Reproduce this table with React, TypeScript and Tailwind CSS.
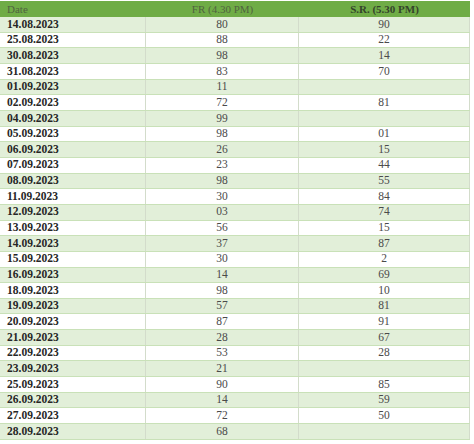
import React from "react";

const rows: [string, string, string][] = [
  ["14.08.2023", "80", "90"],
  ["25.08.2023", "88", "22"],
  ["30.08.2023", "98", "14"],
  ["31.08.2023", "83", "70"],
  ["01.09.2023", "11", ""],
  ["02.09.2023", "72", "81"],
  ["04.09.2023", "99", ""],
  ["05.09.2023", "98", "01"],
  ["06.09.2023", "26", "15"],
  ["07.09.2023", "23", "44"],
  ["08.09.2023", "98", "55"],
  ["11.09.2023", "30", "84"],
  ["12.09.2023", "03", "74"],
  ["13.09.2023", "56", "15"],
  ["14.09.2023", "37", "87"],
  ["15.09.2023", "30", "2"],
  ["16.09.2023", "14", "69"],
  ["18.09.2023", "98", "10"],
  ["19.09.2023", "57", "81"],
  ["20.09.2023", "87", "91"],
  ["21.09.2023", "28", "67"],
  ["22.09.2023", "53", "28"],
  ["23.09.2023", "21", ""],
  ["25.09.2023", "90", "85"],
  ["26.09.2023", "14", "59"],
  ["27.09.2023", "72", "50"],
  ["28.09.2023", "68", ""],
];

export default function App() {
  return (
    <div
      className="w-[474px] h-[444px] bg-white pt-[1px] overflow-hidden"
      style={{ fontFamily: '"Liberation Serif", "DejaVu Serif", serif' }}
    >
      <div className="w-[470px] flex flex-col">
        <div className="grid grid-cols-[146px_153px_171px] h-[16px] bg-[#6fac46] items-center text-[11px] leading-none">
          <div className="pl-[7px] text-[#4f6340]">Date</div>
          <div className="text-center text-[#4f6340]">FR (4.30 PM)</div>
          <div className="text-center font-bold text-[#34432b]">S.R. (5.30 PM)</div>
        </div>
        {rows.map((r, i) => (
          <div
            key={i}
            className={`grid grid-cols-[146px_153px_171px] h-[15.67px] border-b border-[#c9e1b8] items-center text-[11.5px] leading-none ${
              i % 2 === 0 ? "bg-[#e2efd9]" : "bg-white"
            }`}
          >
            <div className="h-full flex items-center pl-[7px] font-bold text-[#262626] border-r border-[#d3dccb]">
              {r[0]}
            </div>
            <div className="h-full flex items-center justify-center text-[#4a4a4a] border-r border-[#d3dccb]">
              {r[1]}
            </div>
            <div className="h-full flex items-center justify-center text-[#4a4a4a] border-r border-[#d3dccb]">
              {r[2]}
            </div>
          </div>
        ))}
      </div>
    </div>
  );
}
